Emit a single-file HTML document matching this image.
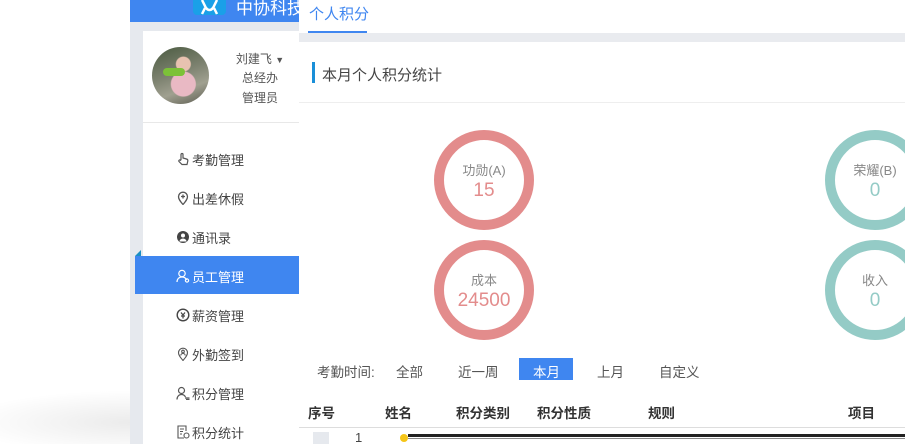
<!DOCTYPE html>
<html><head><meta charset="utf-8"><style>
*{margin:0;padding:0;box-sizing:border-box}
html,body{width:905px;height:444px;overflow:hidden}
body{background:#fff;font-family:"Liberation Sans","Noto Sans CJK SC",sans-serif;position:relative}
.shadow{position:absolute;left:-40px;top:390px;width:170px;height:54px;background:radial-gradient(ellipse at 100% 60%,rgba(0,0,0,.08),rgba(0,0,0,0) 70%)}
.side{position:absolute;left:130px;top:0;width:175px;height:444px;background:#e6e9ee}
.hdr{position:absolute;left:130px;top:0;width:175px;height:22px;background:#3f86f0}
.logo{position:absolute;left:193px;top:0;width:33px;height:15px;background:#1aa0e8;border-radius:0 0 4px 4px}
.panel{position:absolute;left:143px;top:31px;width:162px;height:413px;background:#fff}
.user{position:absolute;left:143px;top:31px;width:156px;height:92px;border-bottom:1px solid #e8e8e8}
.av{position:absolute;left:152px;top:47px;width:57px;height:57px;border-radius:50%;background:radial-gradient(circle at 55% 65%,#e9b9c4 0 12px,transparent 13px),radial-gradient(circle at 55% 30%,#e8c2b0 0 7px,transparent 8px),linear-gradient(160deg,#4a5a40,#7d8270 45%,#a0a090 70%,#5b5b50);}
.gun{position:absolute;left:163px;top:68px;width:22px;height:8px;border-radius:4px;background:#7cc238}
.ut{position:absolute;left:225px;width:70px;text-align:center;font-size:12px;color:#555}
.menu{position:absolute;left:192px;font-size:13px;color:#444}
.mi{position:absolute;left:176px;width:14px;height:14px}
.act{position:absolute;left:135px;top:256px;width:164px;height:38px;background:#3f86f0}
.tri{position:absolute;left:135px;top:250px;width:0;height:0;border-left:6px solid transparent;border-bottom:6px solid #1b8fc4}
.main{position:absolute;left:299px;top:0;width:606px;height:444px;background:#fff}
.band{position:absolute;left:299px;top:33px;width:606px;height:9px;background:#e9ebef}
.tab{position:absolute;left:309px;top:3px;font-size:15px;color:#3f86f0}
.tabl{position:absolute;left:308px;top:31px;width:59px;height:2px;background:#3f86f0}
.bar{position:absolute;left:312px;top:62px;width:3px;height:21px;background:#1a8fd8}
.ttl{position:absolute;left:322px;top:64px;font-size:15px;color:#444}
.hl{position:absolute;left:299px;top:102px;width:606px;height:1px;background:#eee}
.c{position:absolute;width:100px;height:100px;border-radius:50%;border:10px solid #e38c8c;text-align:center}
.c.g{border-color:#94cbc6}
.c .l{font-size:13px;color:#888;margin-top:20px}
.c .v{font-size:19px;color:#e38c8c;margin-top:1px}
.c.g .v{color:#94cbc6}
.f{position:absolute;top:361px;font-size:13.5px;color:#555}
.sel{position:absolute;left:519px;top:358px;width:54px;height:22px;background:#3f86f0}
.th{position:absolute;top:402px;font-size:13.5px;font-weight:bold;color:#333}
.tl{position:absolute;left:299px;top:427px;width:606px;height:1px;background:#ddd}
</style></head><body>
<div class="shadow"></div>
<div class="side"></div>
<div class="hdr"></div>
<div class="logo"><svg width="33" height="15" viewBox="0 0 33 15"><path d="M9 0 L13 8 Q16.5 12 20 8 L24 0 M12 8 L9 14 M21 8 L24 14" stroke="#fff" stroke-width="2.5" fill="none"/></svg></div>
<div style="position:absolute;left:236px;top:-6px;font-size:17px;color:#fff">中协科技</div>
<div class="panel"></div>
<div class="user"></div>
<div class="av"></div><div class="gun"></div>
<div class="ut" style="top:50px">刘建飞 <span style="font-size:9px">▼</span></div>
<div class="ut" style="top:69px">总经办</div>
<div class="ut" style="top:89px">管理员</div>
<div class="act"></div><div class="tri"></div>
<svg class="mi" style="top:152px" viewBox="0 0 14 14" fill="none" stroke="#555" stroke-width="1.2"><path d="M5 8V2.5a1 1 0 0 1 2 0V6l3.5 1c1 .3 1.5 1 1.3 2L11 12.5H6L3 9.5a1 1 0 0 1 1.5-1.3L5 8.7"/></svg>
<div class="menu" style="top:150px">考勤管理</div>
<svg class="mi" style="top:191px" viewBox="0 0 14 14" fill="none" stroke="#555" stroke-width="1.3"><path d="M7 13.5C4 10 2.5 8 2.5 5.7a4.5 4.5 0 0 1 9 0C11.5 8 10 10 7 13.5zM7 3.5v4M5 5.5h4"/></svg>
<div class="menu" style="top:189px">出差休假</div>
<svg class="mi" style="top:230px" viewBox="0 0 14 14"><circle cx="7" cy="7" r="6" fill="#444"/><circle cx="7" cy="5.5" r="2" fill="#fff"/><path d="M3.5 11.5a3.5 3 0 0 1 7 0" fill="#fff"/></svg>
<div class="menu" style="top:228px">通讯录</div>
<svg class="mi" style="top:269px" viewBox="0 0 14 14" fill="none" stroke="#fff" stroke-width="1.2"><circle cx="6" cy="4.5" r="3.2"/><path d="M1 13c0-3 2-5 5-5s4 1.5 4.5 3"/><circle cx="11" cy="11.5" r="1.6"/></svg>
<div class="menu" style="top:267px;color:#fff">员工管理</div>
<svg class="mi" style="top:308px" viewBox="0 0 14 14" fill="none" stroke="#444" stroke-width="1.4"><circle cx="7" cy="7" r="5.8"/><path d="M5 4.5 7 7l2-2.5M7 7v3.5M5 8h4" stroke-width="1.2"/></svg>
<div class="menu" style="top:306px">薪资管理</div>
<svg class="mi" style="top:347px" viewBox="0 0 14 14" fill="none" stroke="#555" stroke-width="1.1"><path d="M7 13.5C4 10 2.5 8 2.5 5.7a4.5 4.5 0 0 1 9 0C11.5 8 10 10 7 13.5z"/><circle cx="7" cy="4.5" r="1.3"/><path d="M4.8 8.5a2.2 2 0 0 1 4.4 0"/></svg>
<div class="menu" style="top:345px">外勤签到</div>
<svg class="mi" style="top:386px" viewBox="0 0 14 14" fill="none" stroke="#555" stroke-width="1.2"><circle cx="5.5" cy="4.5" r="3"/><path d="M1 13.5c0-3 2-5 4.5-5s3.5 1.5 4 2.5M9 12h4.5M10 13.5h3.5"/></svg>
<div class="menu" style="top:384px">积分管理</div>
<svg class="mi" style="top:425px" viewBox="0 0 14 14" fill="none" stroke="#555" stroke-width="1.1"><path d="M8 13H2V1h8v5M4 4h4M4 6.5h3M4 9h2"/><circle cx="10.5" cy="10.5" r="2.5"/></svg>
<div class="menu" style="top:423px">积分统计</div>
<div class="main"></div>
<div class="band"></div>
<div class="tab">个人积分</div><div class="tabl"></div>
<div class="bar"></div><div class="ttl">本月个人积分统计</div>
<div class="hl"></div>
<div class="c" style="left:434px;top:130px"><div class="l">功勋(A)</div><div class="v">15</div></div>
<div class="c" style="left:434px;top:240px"><div class="l">成本</div><div class="v">24500</div></div>
<div class="c g" style="left:825px;top:130px"><div class="l">荣耀(B)</div><div class="v">0</div></div>
<div class="c g" style="left:825px;top:240px"><div class="l">收入</div><div class="v">0</div></div>
<div class="f" style="left:317px">考勤时间:</div>
<div class="f" style="left:396px">全部</div>
<div class="f" style="left:458px">近一周</div>
<div class="sel"></div>
<div class="f" style="left:533px;color:#fff">本月</div>
<div class="f" style="left:597px">上月</div>
<div class="f" style="left:659px">自定义</div>
<div class="th" style="left:308px">序号</div>
<div class="th" style="left:385px">姓名</div>
<div class="th" style="left:456px">积分类别</div>
<div class="th" style="left:537px">积分性质</div>
<div class="th" style="left:648px">规则</div>
<div class="th" style="left:848px">项目</div>
<div class="tl"></div>
<div style="position:absolute;left:313px;top:432px;width:16px;height:12px;background:#e6e9ee"></div>
<div style="position:absolute;left:355px;top:430px;font-size:13px;color:#444">1</div>
<div style="position:absolute;left:400px;top:434px;width:8px;height:8px;border-radius:50%;background:#f5c518"></div>
<div style="position:absolute;left:408px;top:434px;width:497px;height:3px;background:#222"></div>
<div style="position:absolute;left:408px;top:438px;width:497px;height:1px;background:#888"></div>
</body></html>
